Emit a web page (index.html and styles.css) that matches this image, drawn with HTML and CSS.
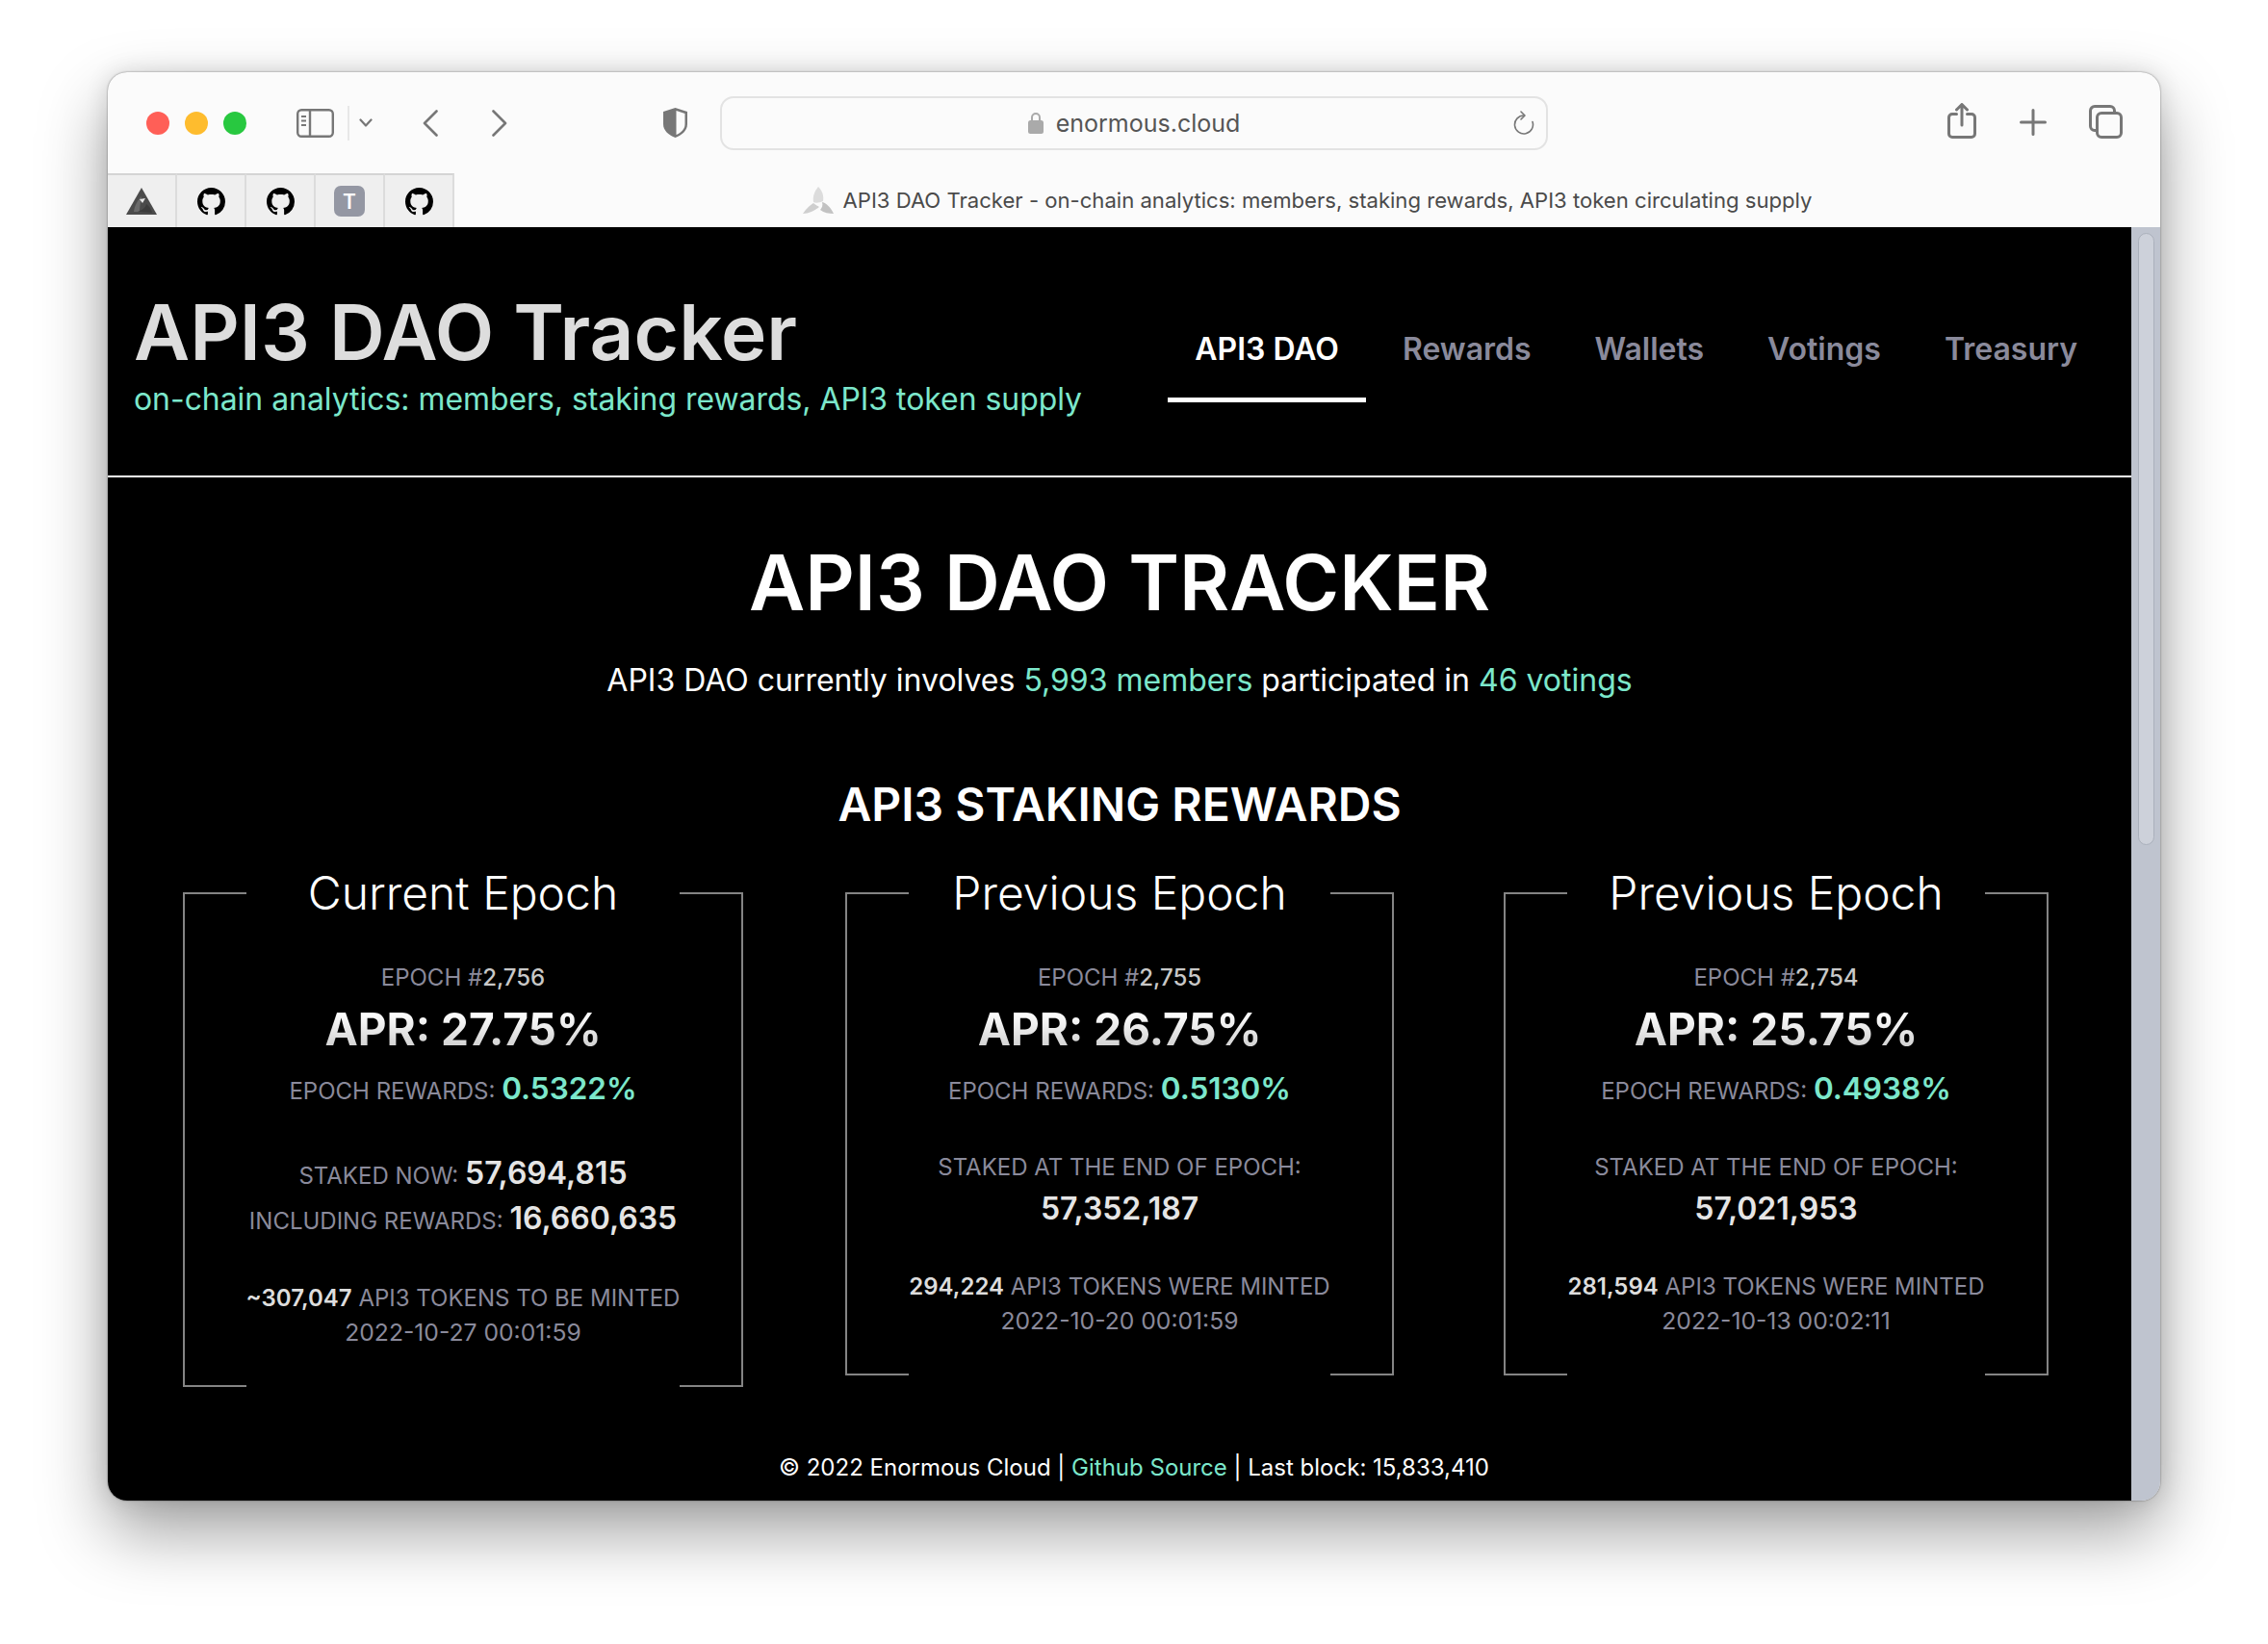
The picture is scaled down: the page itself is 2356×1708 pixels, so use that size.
FILE: index.html
```html
<!DOCTYPE html>
<html lang="en">
<head>
  <meta charset="UTF-8" />
  <title>API3 DAO Tracker</title>
  <link rel="stylesheet" href="styles.css">
</head>
<body>

  <svg class="defs" width="0" height="0">
    <symbol id="octocat" viewBox="0 0 16 16">
      <path d="M8 0C3.58 0 0 3.58 0 8c0 3.54 2.29 6.53 5.47 7.59.4.07.55-.17.55-.38 0-.19-.01-.82-.01-1.49-2.01.37-2.53-.49-2.69-.94-.09-.23-.48-.94-.82-1.13-.28-.15-.68-.52-.01-.53.63-.01 1.08.58 1.23.82.72 1.21 1.87.87 2.33.66.07-.52.28-.87.51-1.07-1.78-.2-3.64-.89-3.64-3.95 0-.87.31-1.59.82-2.15-.08-.2-.36-1.02.08-2.12 0 0 .67-.21 2.2.82.64-.18 1.32-.27 2-.27.68 0 1.36.09 2 .27 1.53-1.04 2.2-.82 2.2-.82.44 1.1.16 1.92.08 2.12.51.56.82 1.27.82 2.15 0 3.07-1.87 3.75-3.65 3.95.29.25.54.73.54 1.48 0 1.07-.01 1.93-.01 2.2 0 .21.15.46.55.38A8.013 8.013 0 0016 8c0-4.42-3.58-8-8-8z"/>
    </symbol>
  </svg>

  <div class="window">

    <div class="toolbar">
      <div class="lights">
        <span class="light red"></span>
        <span class="light yellow"></span>
        <span class="light green"></span>
      </div>
      <svg class="i-sidebar" width="39" height="30" viewBox="0 0 39 30" fill="none" stroke="#777" stroke-width="2.4">
        <rect x="1.2" y="1.2" width="36.6" height="27.6" rx="4"/>
        <path d="M14 1.2v27.6"/>
        <path d="M5 8h5M5 12.500h5M5 17h5" stroke-width="2"/>
      </svg>
      <span class="sep"></span>
      <svg class="i-chevron" width="14" height="9" viewBox="0 0 14 9" fill="none" stroke="#777" stroke-width="2.2" stroke-linecap="round" stroke-linejoin="round">
        <path d="M1.500 1.500L7 7.500l5.500-6"/>
      </svg>
      <svg class="i-back" width="16" height="28" viewBox="0 0 16 28" fill="none" stroke="#777" stroke-width="2.6" stroke-linecap="round" stroke-linejoin="round">
        <path d="M14.500 1.500L2 14l12.500 12.500"/>
      </svg>
      <svg class="i-forward" width="16" height="28" viewBox="0 0 16 28" fill="none" stroke="#777" stroke-width="2.6" stroke-linecap="round" stroke-linejoin="round">
        <path d="M1.500 1.500L14 14 1.500 26.500"/>
      </svg>
      <svg class="i-shield" width="27" height="33" viewBox="0 0 27 33">
        <path d="M13.500 1L26 5v13c0 7-6 11.500-12.500 14C7 29.500 1 25 1 18V5z" fill="#777"/>
        <path d="M14.500 4l9 2.900V18c0 5.300-4.300 8.900-9 11.100z" fill="#fbfbfb"/>
      </svg>
      <div class="urlbar">
        <svg class="i-lock" width="16" height="23" viewBox="0 0 16 23">
          <path d="M4 10V6a4 4 0 018 0v4" fill="none" stroke="#aaa" stroke-width="2"/>
          <rect y="9" width="16" height="14" rx="2.500" fill="#aaa"/>
        </svg>
        <span class="url">enormous.cloud</span>
        <svg class="i-reload" width="22" height="25" viewBox="0 0 22 25" fill="none" stroke="#777" stroke-width="1.600" stroke-linecap="round" stroke-linejoin="round">
          <path d="M11 5A9.500 9.500 0 1 0 20 11.500"/>
          <path d="M8 1l4 4-4 4"/>
        </svg>
      </div>
      <svg class="i-share" width="30" height="37" viewBox="0 0 30 37" fill="none" stroke="#777" stroke-width="3" stroke-linecap="round" stroke-linejoin="round">
        <path d="M9.500 11.500H5A3.500 3.500 0 001.500 15v17A3.500 3.500 0 005 35.500h20a3.500 3.500 0 003.500-3.500V15a3.500 3.500 0 00-3.500-3.500h-4.500"/>
        <path d="M15 23V2M9.500 7L15 1.500 20.500 7"/>
      </svg>
      <svg class="i-plus" width="28" height="28" viewBox="0 0 28 28" stroke="#777" stroke-width="3" stroke-linecap="round">
        <path d="M14 1.500v25M1.500 14h25"/>
      </svg>
      <svg class="i-tabs" width="35" height="35" viewBox="0 0 35 35" fill="none" stroke="#777" stroke-width="3">
        <path d="M7.500 26.500H6A4.500 4.500 0 011.500 22V6A4.500 4.500 0 016 1.500h16A4.500 4.500 0 0126.500 6v2"/>
        <rect x="8.500" y="8.500" width="25" height="25" rx="4.500"/>
      </svg>
    </div>

    <div class="tabstrip">
      <div class="pinned">
        <span class="pin">
          <svg width="32" height="28" viewBox="0 0 32 28">
            <path d="M16 0l16 28H0z" fill="#4b4b4b"/>
            <path d="M16 9c-4 4-7 9-8 16h6c0-5 1-9 2-16z" fill="#6a6a6a"/>
            <path d="M21 17c-1 4-4 6-9 8l15 1c-1-4-3-7-6-9z" fill="#3c3c3c"/>
            <path d="M14 12l6-1-3 5z" fill="#e8e8e8"/>
          </svg>
        </span>
        <span class="pin"><svg class="gh" viewBox="0 0 16 16"><use href="#octocat"/></svg></span>
        <span class="pin"><svg class="gh" viewBox="0 0 16 16"><use href="#octocat"/></svg></span>
        <span class="pin"><span class="letter">T</span></span>
        <span class="pin"><svg class="gh" viewBox="0 0 16 16"><use href="#octocat"/></svg></span>
      </div>
      <div class="active-tab">
        <svg width="32" height="28" viewBox="0 0 32 28">
          <path d="M16 0C12 5 10 10 11 16c2 1 6 1 10-1 1-6-1-11-5-15z" fill="#dcdcdc"/>
          <path d="M0 28c4-6 8-9 11-11 2 2 5 3 6 4-5 4-11 7-17 7z" fill="#cfcfcf"/>
          <path d="M32 28c-3-6-7-11-12-12 1 3 0 6-2 8 4 3 9 4 14 4z" fill="#c2c2c2"/>
        </svg>
        <span>API3 DAO Tracker - on-chain analytics: members, staking rewards, API3 token circulating supply</span>
      </div>
    </div>

    <div class="viewport">
      <div class="page">

        <header class="site-header">
          <div class="brand">
            <h1>API3 DAO Tracker</h1>
            <p>on-chain analytics: members, staking rewards, API3 token supply</p>
          </div>
          <nav class="nav">
            <a class="active" href="#">API3 DAO</a>
            <a href="#">Rewards</a>
            <a href="#">Wallets</a>
            <a href="#">Votings</a>
            <a href="#">Treasury</a>
          </nav>
        </header>

        <main class="main">
          <h2 class="hero">API3 DAO TRACKER</h2>
          <p class="lead">API3 DAO currently involves <a href="#">5,993 members</a> participated in <a href="#">46 votings</a></p>
          <h3 class="section">API3 STAKING REWARDS</h3>

          <div class="epochs">
            <section class="card">
              <div class="card-title">Current Epoch</div>
              <div class="epoch">EPOCH #<b>2,756</b></div>
              <div class="apr">APR: 27.75%</div>
              <div class="rewards">EPOCH REWARDS: <b>0.5322%</b></div>
              <div class="staked first">STAKED NOW: <b>57,694,815</b></div>
              <div class="staked">INCLUDING REWARDS: <b>16,660,635</b></div>
              <div class="minted"><b>~307,047</b> API3 TOKENS TO BE MINTED</div>
              <div class="date">2022-10-27 00:01:59</div>
            </section>

            <section class="card">
              <div class="card-title">Previous Epoch</div>
              <div class="epoch">EPOCH #<b>2,755</b></div>
              <div class="apr">APR: 26.75%</div>
              <div class="rewards">EPOCH REWARDS: <b>0.5130%</b></div>
              <div class="end-label">STAKED AT THE END OF EPOCH:</div>
              <div class="end-value">57,352,187</div>
              <div class="minted"><b>294,224</b> API3 TOKENS WERE MINTED</div>
              <div class="date">2022-10-20 00:01:59</div>
            </section>

            <section class="card">
              <div class="card-title">Previous Epoch</div>
              <div class="epoch">EPOCH #<b>2,754</b></div>
              <div class="apr">APR: 25.75%</div>
              <div class="rewards">EPOCH REWARDS: <b>0.4938%</b></div>
              <div class="end-label">STAKED AT THE END OF EPOCH:</div>
              <div class="end-value">57,021,953</div>
              <div class="minted"><b>281,594</b> API3 TOKENS WERE MINTED</div>
              <div class="date">2022-10-13 00:02:11</div>
            </section>
          </div>
        </main>

        <footer class="footer">
          © 2022 Enormous Cloud | <a href="#">Github Source</a> | Last block: 15,833,410
        </footer>
      </div>

      <div class="scrollbar"><div class="thumb"></div></div>
    </div>
  </div>

</body>
</html>
```

FILE: styles.css
```css
* {
  box-sizing: border-box;
}

body {
  margin: 0;
  min-height: 100vh;
  padding: 75px 0 0 112px;
  background: #fff;
  font-family: Inter, "Noto Sans", sans-serif;
}

a {
  text-decoration: none;
  color: inherit;
}

.defs {
  position: absolute;
}

.window {
  display: flex;
  flex-direction: column;
  width: 2132px;
  height: 1484px;
  border-radius: 20px;
  overflow: hidden;
  background: #fbfbfb;
  box-shadow: 0 32px 70px rgba(0,0,0,0.38), 0 0 24px rgba(0,0,0,0.12), 0 0 2px rgba(0,0,0,0.5);
}

/* ======= browser toolbar ======= */
.toolbar {
  display: flex;
  align-items: center;
  height: 105px;
  flex-shrink: 0;
}

.toolbar svg {
  flex-shrink: 0;
}

.lights {
  display: flex;
  gap: 16px;
  margin-left: 40px;
}

.light {
  width: 24px;
  height: 24px;
  border-radius: 50%;
}

.red { background: #ff5f57; }
.yellow { background: #febc2e; }
.green { background: #28c840; }

.i-sidebar { margin-left: 52px; }
.sep {
  width: 2px;
  height: 36px;
  margin-left: 14px;
  background: #e8e8e8;
}
.i-chevron { margin-left: 10px; }
.i-back { margin-left: 52px; }
.i-forward { margin-left: 56px; }
.i-shield { margin-left: 161px; }

.urlbar {
  position: relative;
  display: flex;
  align-items: center;
  justify-content: center;
  gap: 13px;
  width: 860px;
  height: 56px;
  margin-left: 33px;
  border: 2px solid #e3e3e3;
  border-radius: 14px;
}

.url {
  font-size: 25px;
  color: #555;
}

.i-reload {
  position: absolute;
  right: 12px;
  top: 13px;
}

.i-share { margin: 0 0 4px 415px; }
.i-plus { margin: 0 0 2px 45px; }
.i-tabs { margin: 0 0 2px 44px; }

/* ======= tabs ======= */
.tabstrip {
  display: flex;
  height: 56px;
  flex-shrink: 0;
}

.pinned {
  display: flex;
}

.pin {
  display: flex;
  align-items: center;
  justify-content: center;
  width: 72px;
  background: #efefef;
  border-top: 2px solid #d4d4d4;
  border-right: 2px solid #dcdcdc;
}

.gh {
  width: 29px;
  height: 29px;
  fill: #000;
}

.letter {
  display: flex;
  align-items: center;
  justify-content: center;
  width: 32px;
  height: 32px;
  border-radius: 7px;
  background: #9497a3;
  color: #fff;
  font-size: 21px;
  font-weight: 600;
}

.active-tab {
  flex: 1;
  display: flex;
  align-items: center;
  justify-content: center;
  gap: 10px;
  font-size: 22.1px;
  color: #4a4a4a;
}

/* ======= page ======= */
.viewport {
  flex: 1;
  display: flex;
  min-height: 0;
}

.page {
  flex: 1;
  display: flex;
  flex-direction: column;
  background: #000;
  color: #fff;
}

.scrollbar {
  width: 30px;
  padding: 6px 6px 0 7px;
  background: #bfc4cf;
}

.thumb {
  height: 636px;
  border-radius: 9px;
  background: #cdd1da;
  border: 1px solid #aab0bb;
}

.site-header {
  display: flex;
  justify-content: space-between;
  height: 260px;
  padding: 0 28px 0 27px;
  border-bottom: 2px solid #fff;
  flex-shrink: 0;
}

.brand {
  padding-top: 63px;
}

.brand h1 {
  margin: 0;
  font-size: 80px;
  line-height: 92px;
  font-weight: 600;
  color: #ddd;
}

.brand p {
  margin: 4px 0 0;
  font-size: 31.9px;
  line-height: 40px;
  color: #7ce7cb;
}

.nav {
  display: flex;
  gap: 10px;
  align-items: flex-start;
  padding-top: 100px;
}

.nav a {
  display: block;
  height: 82px;
  padding: 7px 28px 0;
  font-size: 32px;
  line-height: 40px;
  font-weight: 600;
  color: #8a8a9b;
}

.nav a.active {
  color: #fff;
  border-bottom: 5px solid #fff;
}

.main {
  flex: 1;
  padding: 0 28px;
  text-align: center;
}

.hero {
  margin: 60px 0 0;
  font-size: 80px;
  line-height: 98px;
  font-weight: 600;
}

.lead {
  margin: 33px 0 0;
  font-size: 32px;
  line-height: 40px;
}

.lead a,
.footer a {
  color: #7ce7cb;
}

.section {
  margin: 79px 0 0;
  font-size: 48px;
  line-height: 60px;
  font-weight: 600;
}

/* ======= epoch cards ======= */
.epochs {
  display: grid;
  grid-template-columns: repeat(3, 1fr);
  justify-items: center;
  align-items: start;
  margin-top: 61px;
}

.card {
  position: relative;
  width: fit-content;
  padding: 0 64px 38px;
  border: 2px solid #848484;
  color: #8a8a9b;
  font-size: 24px;
  line-height: 36px;
}

/* gap in the bottom line */
.card::after {
  content: "";
  position: absolute;
  left: 64px;
  right: 64px;
  bottom: -2px;
  height: 2px;
  background: #000;
}

.card b {
  font-weight: 600;
  color: #ddd;
}

.card-title {
  margin-top: -30px;
  background: #000;
  color: #fff;
  font-size: 48px;
  line-height: 58px;
  font-weight: 300;
}

.epoch {
  margin-top: 41px;
}

.epoch b {
  font-weight: 500;
  color: #c8c8c8;
}

.apr {
  margin-top: 6px;
  font-size: 46px;
  line-height: 58px;
  font-weight: 700;
  background: linear-gradient(180deg, #fff 20%, #ccc 90%);
  -webkit-background-clip: text;
  background-clip: text;
  color: transparent;
}

.rewards {
  margin-top: 12px;
  line-height: 42px;
}

.rewards b {
  font-size: 31.5px;
  color: #7ce7cb;
}

.staked {
  margin-top: 2px;
  line-height: 42px;
}

.staked.first {
  margin-top: 43px;
}

.staked b,
.end-value {
  font-size: 32px;
  font-weight: 600;
  color: #e5e5e5;
}

.end-label {
  margin-top: 40px;
}

.end-value {
  margin-top: 4px;
  line-height: 42px;
}

.minted {
  margin-top: 41px;
}

.end-value + .minted {
  margin-top: 42px;
}

.date {
  font-size: 24.7px;
  line-height: 34px;
}

.footer {
  height: 70px;
  flex-shrink: 0;
  padding: 18px 0 0 30px;
  text-align: center;
  font-size: 24px;
  line-height: 36px;
}
```
